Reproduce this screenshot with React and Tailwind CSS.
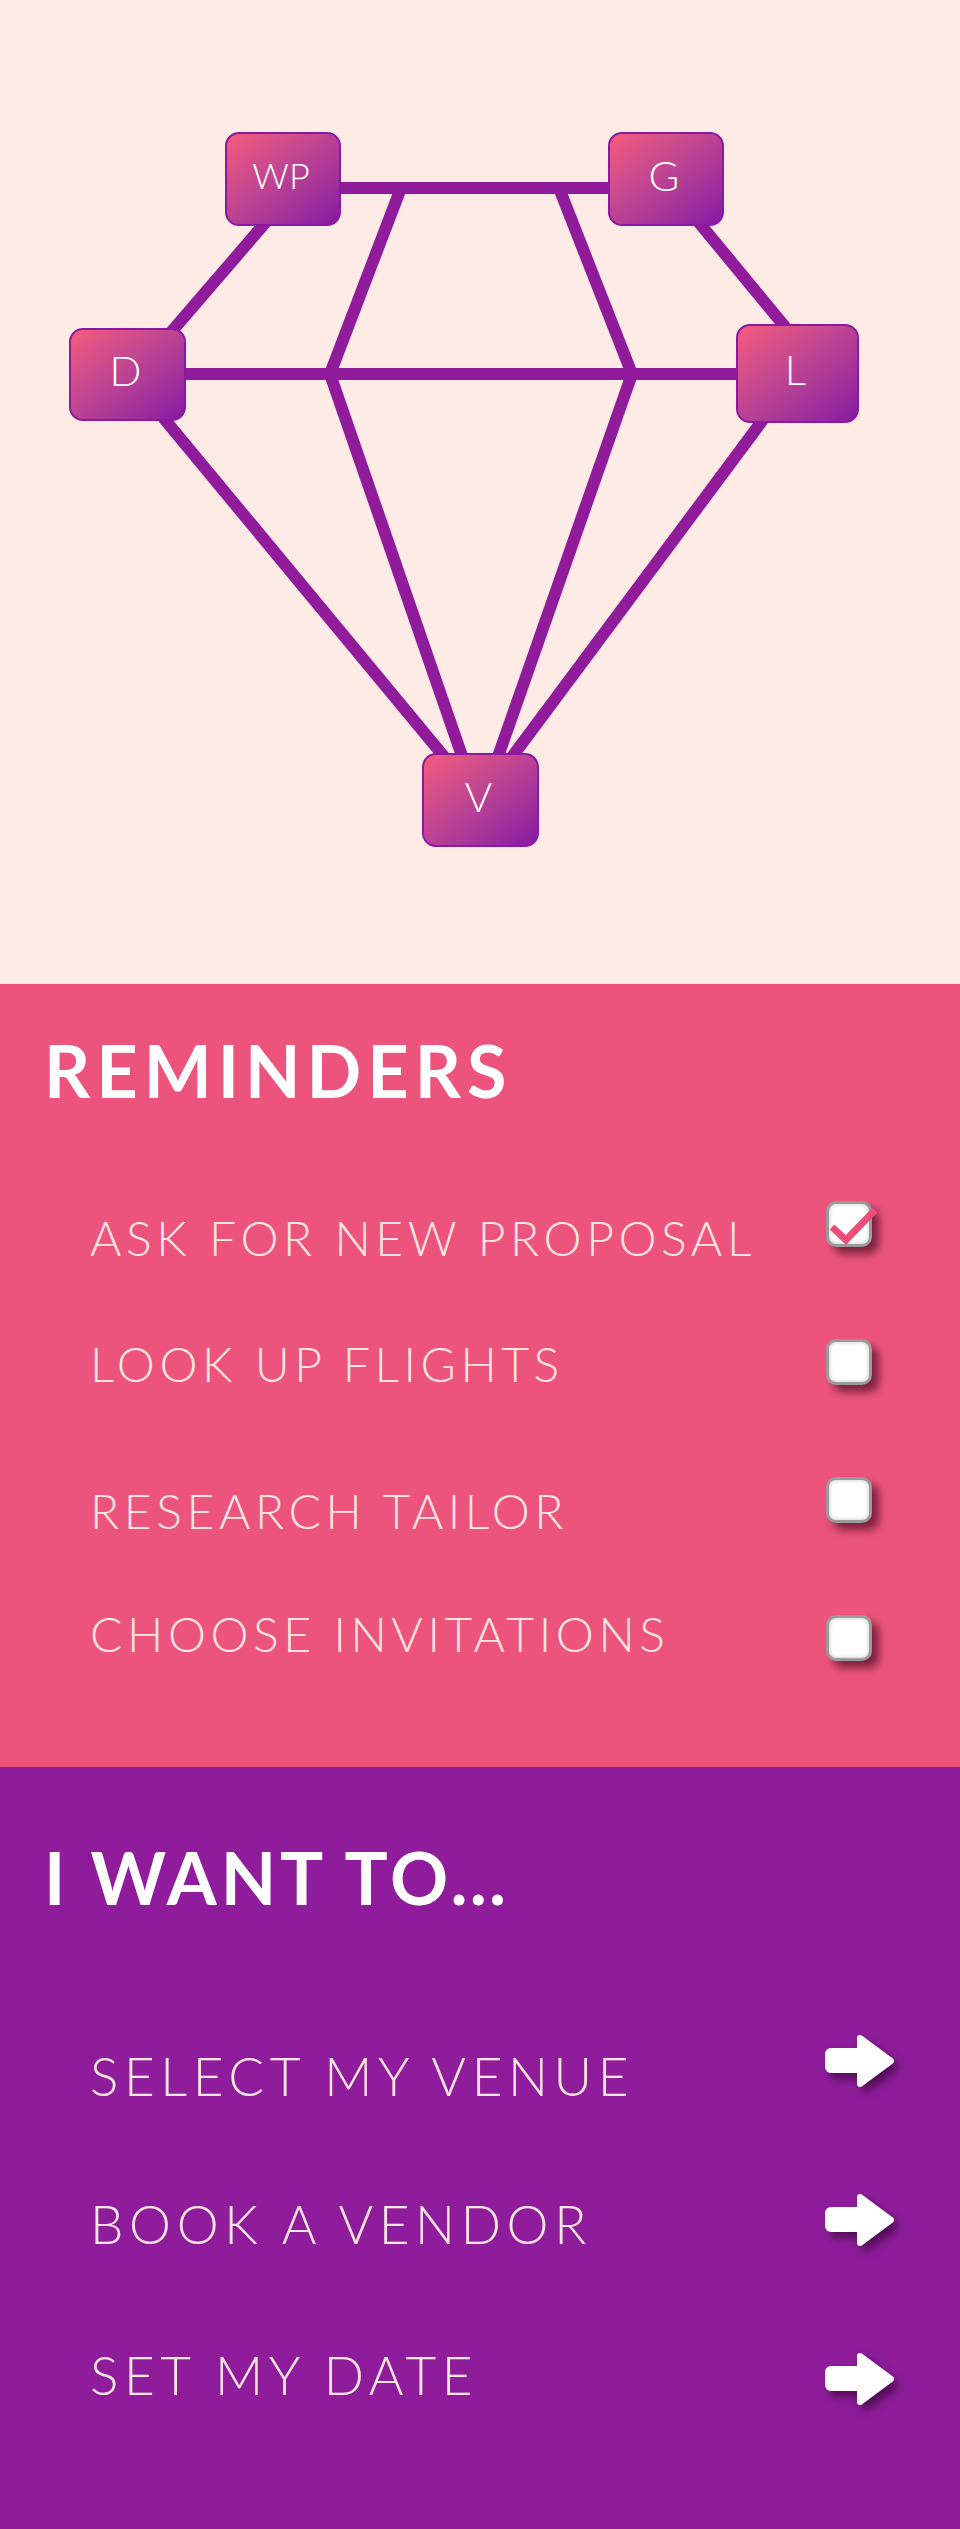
import React from "react";

const lines = [
  [283, 188, 666, 188],
  [127, 374, 797, 374],
  [303, 179, 135, 374],
  [663, 179, 824, 374],
  [401, 188, 330, 374],
  [559, 188, 632, 374],
  [330, 374, 480, 808],
  [632, 374, 480, 808],
  [127, 374, 480, 800],
  [797, 374, 480, 800],
];

const nodes = [
  { label: "WP", cls: "left-[225px] top-[132px] w-[116px] h-[94px] text-[36px]" },
  { label: "G", cls: "left-[608px] top-[132px] w-[116px] h-[94px] text-[42px]" },
  { label: "D", cls: "left-[69px] top-[328px] w-[117px] h-[93px] text-[42px]" },
  { label: "L", cls: "left-[736px] top-[324px] w-[123px] h-[99px] text-[42px]" },
  { label: "V", cls: "left-[422px] top-[753px] w-[117px] h-[94px] text-[42px]" },
];

const reminders = [
  { label: "ASK FOR NEW PROPOSAL", checked: true, pt: "pt-[59px]" },
  { label: "LOOK UP FLIGHTS", checked: false, pt: "pt-[47px]" },
  { label: "RESEARCH TAILOR", checked: false, pt: "pt-[56px]" },
  { label: "CHOOSE INVITATIONS", checked: false, pt: "pt-[41px]" },
];

const wants = [
  { label: "SELECT MY VENUE", pt: "pt-[68px]" },
  { label: "BOOK A VENDOR", pt: "pt-[57px]" },
  { label: "SET MY DATE", pt: "pt-[49px]" },
];

function CheckBox({ checked }) {
  return (
    <div className="relative w-[46px] h-[46px] rounded-[10px] border-[3px] border-[#9b9b9b] bg-white shadow-[inset_0_0_4px_rgba(0,0,0,0.25),7px_7px_9px_rgba(50,0,20,0.6)]">
      {checked && (
        <svg className="absolute left-[-3px] top-[-3px] overflow-visible" width="52" height="46">
          <polyline points="6,26 20,39 49,9" fill="none" stroke="#ec4f7c" strokeWidth="7" />
        </svg>
      )}
    </div>
  );
}

function Arrow() {
  return (
    <svg width="69" height="52" className="drop-shadow-[5px_6px_5px_rgba(40,0,40,0.6)]">
      <rect x="0" y="13" width="38" height="25" rx="6" fill="#fff" />
      <polygon points="35,3 66,26 35,49" fill="#fff" stroke="#fff" strokeWidth="6" strokeLinejoin="round" />
    </svg>
  );
}

export default function App() {
  return (
    <div className="w-[960px] font-['Lato','Open_Sans',sans-serif]">
      <section className="relative h-[984px] bg-[#ffebe6]">
        <svg className="absolute left-0 top-0" width="960" height="984">
          {lines.map(([x1, y1, x2, y2], i) => (
            <line key={i} x1={x1} y1={y1} x2={x2} y2={y2} stroke="#901c9b" strokeWidth="12" />
          ))}
        </svg>
        {nodes.map((n) => (
          <div
            key={n.label}
            className={`absolute ${n.cls} flex items-center justify-center pb-[8px] pr-[4px] rounded-[14px] border-2 border-[#8a1aa2] bg-linear-to-br from-[#f45b7b] to-[#8716a3] text-white font-light`}
          >
            {n.label}
          </div>
        ))}
      </section>

      <section className="bg-[#ec547e] pt-[50px] pb-[60px]">
        <h2 className="pl-[44px] text-[72px] leading-[72px] font-bold tracking-[6px] text-white">REMINDERS</h2>
        <div className="mt-[49px]">
          {reminders.map((r) => (
            <div key={r.label} className="flex h-[138px] justify-between pl-[90px] pr-[88px]">
              <p className={`${r.pt} text-[48px] leading-[48px] font-light tracking-[4.6px] text-[#ffe6e0]`}>{r.label}</p>
              <div className="pt-[46px]">
                <CheckBox checked={r.checked} />
              </div>
            </div>
          ))}
        </div>
      </section>

      <section className="bg-[#8f1d9b] pt-[74px] pb-[71px]">
        <h2 className="pl-[44px] text-[72px] leading-[72px] font-bold tracking-[4px] text-white">I WANT TO…</h2>
        <div className="mt-[68px]">
          {wants.map((w) => (
            <div key={w.label} className="flex h-[159px] justify-between pl-[90px] pr-[66px]">
              <p className={`${w.pt} text-[53px] leading-[53px] font-light tracking-[5.6px] text-[#ffe6e0]`}>{w.label}</p>
              <div className="pt-[54px]">
                <Arrow />
              </div>
            </div>
          ))}
        </div>
      </section>
    </div>
  );
}
